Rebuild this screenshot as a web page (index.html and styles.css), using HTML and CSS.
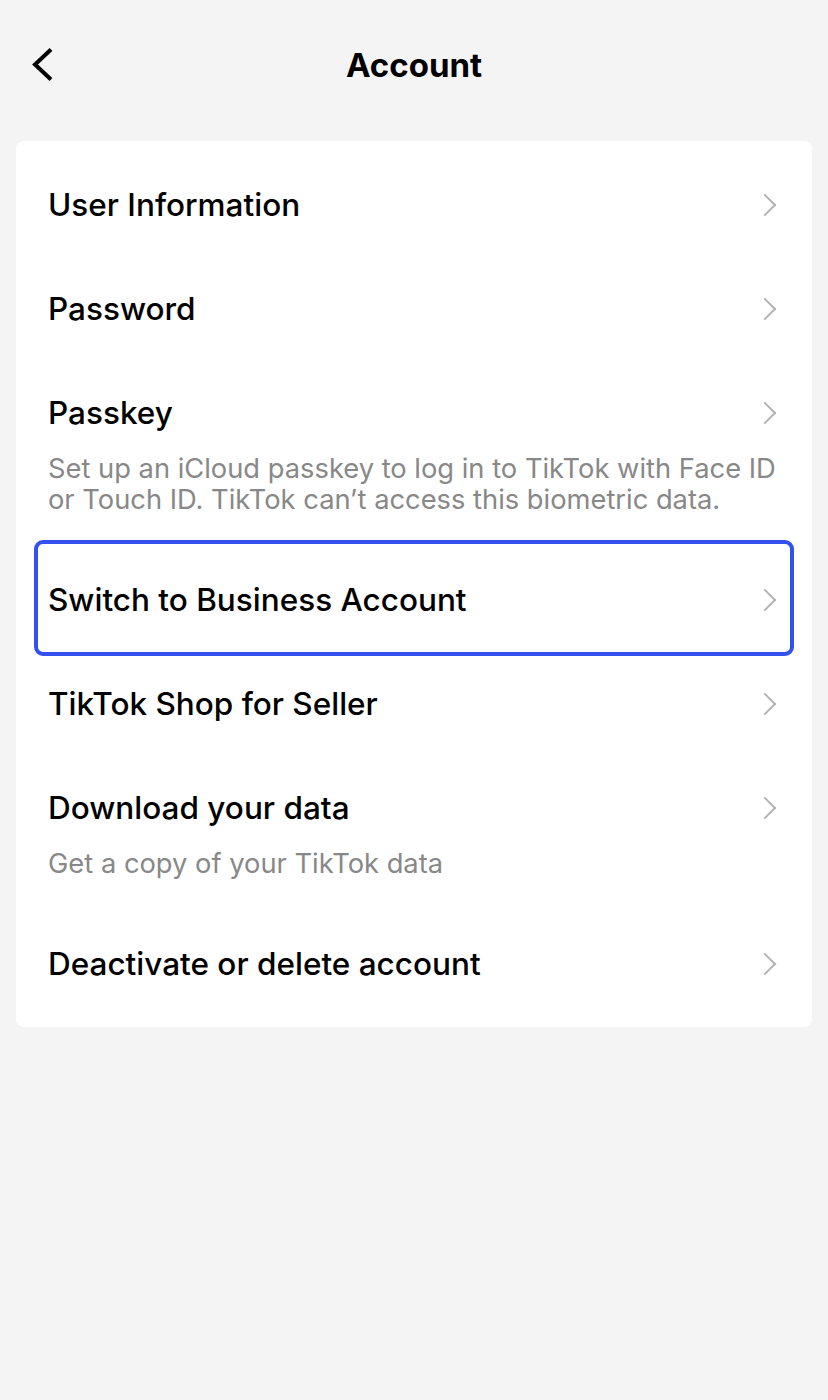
FILE: index.html
```html
<!DOCTYPE html>
<html lang="en">
<head>
    <meta charset="UTF-8">
    <meta name="viewport" content="width=device-width, initial-scale=1.0">
    <title>Account</title>
    <link rel="stylesheet" href="styles.css">
</head>
<body>
    <div class="header">
        <a class="back" href="#">
            <svg width="26" height="36" viewBox="0 0 26 36">
                <path d="M21 2.5 L5 17.5 L21 32.5" fill="none" stroke="#000" stroke-width="4" stroke-linecap="butt" stroke-linejoin="miter"/>
            </svg>
        </a>
        <h1>Account</h1>
    </div>

    <div class="card">
        <a class="row" href="#">
            <div class="text">
                <div class="title">User Information</div>
            </div>
            <span class="chev"></span>
        </a>
        <a class="row" href="#">
            <div class="text">
                <div class="title">Password</div>
            </div>
            <span class="chev"></span>
        </a>
        <a class="row has-desc" href="#">
            <div class="text">
                <div class="title">Passkey</div>
                <div class="desc">Set up an iCloud passkey to log in to TikTok with Face ID or Touch ID. TikTok can’t access this biometric data.</div>
            </div>
            <span class="chev"></span>
        </a>
        <a class="row selected" href="#">
            <div class="text">
                <div class="title">Switch to Business Account</div>
            </div>
            <span class="chev"></span>
        </a>
        <a class="row" href="#">
            <div class="text">
                <div class="title">TikTok Shop for Seller</div>
            </div>
            <span class="chev"></span>
        </a>
        <a class="row has-desc" href="#">
            <div class="text">
                <div class="title">Download your data</div>
                <div class="desc">Get a copy of your TikTok data</div>
            </div>
            <span class="chev"></span>
        </a>
        <a class="row" href="#">
            <div class="text">
                <div class="title">Deactivate or delete account</div>
            </div>
            <span class="chev"></span>
        </a>
    </div>
</body>
</html>
```

FILE: styles.css
```css
body {
    margin: 0;
    background-color: #f4f4f4;
    font-family: Inter, "Noto Sans", sans-serif;
    color: #000;
}
.header {
    position: relative;
    height: 141px;
    display: flex;
    justify-content: center;
}
.header h1 {
    margin: 0;
    padding-top: 44px;
    font-size: 33px;
    font-weight: 700;
    line-height: 42px;
}
.back {
    position: absolute;
    left: 30px;
    top: 47px;
    display: block;
}
.card {
    margin: 0 16px;
    background: #fff;
    border-radius: 8px;
    padding: 12px 0 11px;
}
.row {
    position: relative;
    display: flex;
    align-items: flex-start;
    padding: 36px 34px 36px 32px;
    color: inherit;
    text-decoration: none;
}
.row.has-desc {
    padding-bottom: 33px;
}
.text {
    flex: 1;
}
.title {
    font-size: 31.5px;
    font-weight: 500;
    line-height: 32px;
}
.desc {
    margin-top: 24px;
    margin-right: -20px;
    font-size: 27.3px;
    line-height: 31px;
    color: #888;
}
.chev {
    width: 14px;
    height: 14px;
    margin-top: 8px;
    margin-right: 5px;
    border-top: 2.8px solid #b3b3b3;
    border-right: 2.8px solid #b3b3b3;
    transform: rotate(45deg);
}
.selected::after {
    content: "";
    position: absolute;
    left: 18px;
    right: 18px;
    top: -8px;
    bottom: -4px;
    border: 4px solid #3350f0;
    border-radius: 9px;
}
```
